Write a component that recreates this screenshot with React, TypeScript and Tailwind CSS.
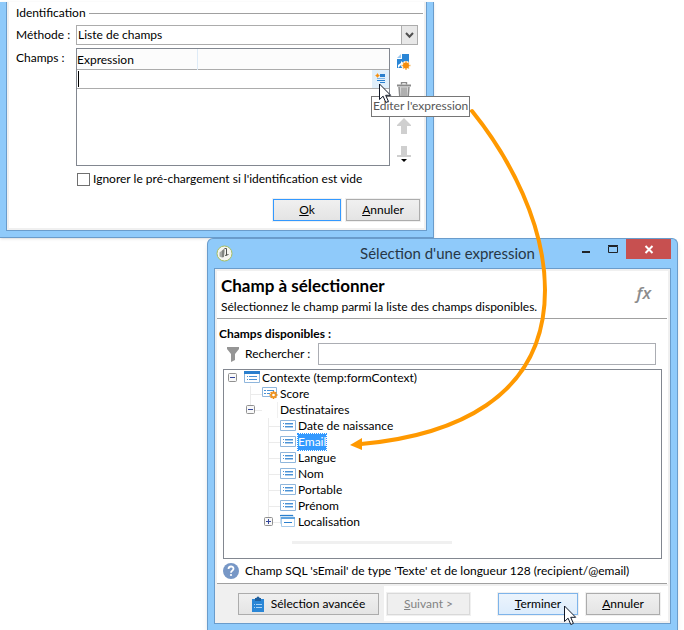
import type { ReactNode } from "react";
import clsx from "clsx";

interface TreeItem {
  label: string;
  level: number;
  icon: "table" | "score" | "field" | "folder" | "none";
  toggle?: "open" | "closed";
  selected?: boolean;
  last?: boolean;
}

const treeItems: TreeItem[] = [
  { label: "Contexte (temp:formContext)", level: 0, icon: "table", toggle: "open" },
  { label: "Score", level: 1, icon: "score" },
  { label: "Destinataires", level: 1, icon: "none", toggle: "open", last: true },
  { label: "Date de naissance", level: 2, icon: "field" },
  { label: "Email", level: 2, icon: "field", selected: true },
  { label: "Langue", level: 2, icon: "field" },
  { label: "Nom", level: 2, icon: "field" },
  { label: "Portable", level: 2, icon: "field" },
  { label: "Prénom", level: 2, icon: "field" },
  { label: "Localisation", level: 2, icon: "folder", toggle: "closed", last: true },
];

function Cursor({ className }: { className?: string }) {
  return (
    <svg className={clsx("pointer-events-none absolute z-20", className)} width="13" height="21" viewBox="0 0 13 21">
      <path d="M.5 1v15.5l3.6-3.3 2.7 6.3 2.6-1.1-2.7-6.1h5z" fill="#fff" stroke="#111827" />
    </svg>
  );
}

function NewIcon() {
  return (
    <svg width="14" height="16" viewBox="0 0 14 16">
      <path d="M5 0h7v14H0V5h5z" fill="#2a86d6" />
      <path d="M0 4l4-4v4z" fill="#9cc8ee" />
      <path d="M1 14v-3l3-2V7l3 3-3 3v-2z" fill="#fff" />
      <circle cx="9" cy="11.500" r="4.500" fill="#fff" />
      <path d="M9 7v9M4.500 11.500h9M6 8.500l6 6M12 8.500l-6 6" stroke="#f6b55c" strokeWidth="1.500" />
      <circle cx="9" cy="11.500" r="3" fill="#f28c0f" />
    </svg>
  );
}

function TrashIcon() {
  return (
    <svg width="14" height="16" viewBox="0 0 14 16" fill="none" stroke="#8a8a8a">
      <path d="M4.500 2.500v-2h5v2" strokeWidth="1.400" />
      <path d="M0 3.500h14" strokeWidth="2" />
      <path d="M2 5l.8 10.300h8.400L12 5" fill="#d5d5d5" strokeWidth="1.400" />
      <path d="M5 5.500v9M7 5.500v9M9 5.500v9" strokeWidth="1" />
    </svg>
  );
}

function ExpressionIcon() {
  return (
    <svg width="11" height="11" viewBox="0 0 11 11">
      <path d="M5 1h5v3H5z" fill="#2a7fce" />
      <path d="M2 5.500h8" stroke="#7fb6e6" />
      <path d="M2 7.500h8M5 9.500h5" stroke="#2a7fce" />
      <path d="M2.500 0v5M0 2.500h5" stroke="#f9c27a" />
      <circle cx="2.500" cy="2.500" r="1.500" fill="#f28c0f" />
    </svg>
  );
}

function NodeIcon({ icon }: { icon: TreeItem["icon"] }) {
  return (
    <svg width="18" height="16" viewBox="0 0 18 16" className="shrink-0">
      {icon === "table" && (
        <g>
          <path d="M.5 2.500h15v10H.5z" fill="#fff" stroke="#8fb6dc" />
          <path d="M0 1h16v3H0z" fill="#2a7fce" />
          <path d="M3 6.500h1M3 9.500h1M5 6.500h8M5 9.500h8" stroke="#4a92d6" />
        </g>
      )}
      {icon === "field" && (
        <g>
          <path d="M.5 2.500h15v10H.5z" fill="#fff" stroke="#8fb6dc" />
          <path d="M3 5.500h1M3 8.500h1M5 5.500h8M5 8.500h8" stroke="#4a92d6" />
          <path d="M5 6.500h8M5 9.500h8" stroke="#a9cdee" />
        </g>
      )}
      {icon === "score" && (
        <g>
          <path d="M.5 1.500h14v9H.5z" fill="#fff" stroke="#8fb6dc" />
          <path d="M2 4.500h2M2 7.500h2M5 4.500h7M5 7.500h3" stroke="#4a92d6" />
          <path d="M11.500 5v8M7.500 9h8M8.700 6.200l5.600 5.600M14.300 6.200l-5.600 5.600" stroke="#e8860f" strokeWidth="1.600" />
          <circle cx="11.500" cy="9" r="2.200" fill="#fff" stroke="#f0941f" strokeWidth="1.700" />
        </g>
      )}
      {icon === "folder" && (
        <g>
          <path d="M.5 1v8.500H2V3h11V1z" fill="#dcebf8" stroke="#c3daef" />
          <path d="M0 1h13v1H0z" fill="#2a7fce" />
          <path d="M1.500 3.500h13v9h-13z" fill="#fff" stroke="#a8cbea" />
          <path d="M1 3h14v2H1z" fill="#5fa3df" />
          <path d="M4 8.500h8" stroke="#2a7fce" />
        </g>
      )}
      {icon === "none" && <path d="M15.500 0v16" stroke="#f0f0f0" />}
    </svg>
  );
}

function TreeBranch({ item }: { item: TreeItem }) {
  return (
    <svg width="18" height="16" viewBox="0 0 18 16" className="shrink-0">
      {item.level > 0 && (
        <path d={item.last ? "M6.500 0v8.500H18" : "M6.500 0v16M6.500 8.500H18"} fill="none" stroke="#ebebeb" />
      )}
      {item.toggle && (
        <g>
          <rect x="2.500" y="3.500" width="8" height="8" rx="1" fill="#f8f8f8" stroke="#919191" />
          <path d={item.toggle === "open" ? "M4 7.500h5" : "M4 7.500h5M6.500 5v5"} stroke="#34469a" />
        </g>
      )}
    </svg>
  );
}

function DialogButton({ children, className, disabled }: { children: ReactNode; className?: string; disabled?: boolean }) {
  return (
    <button
      disabled={disabled}
      className={clsx("relative flex h-[22px] items-center justify-center border outline outline-[#f0f0f0]", className)}
    >
      {children}
    </button>
  );
}

const grayButton = "border-[#acacac] bg-linear-to-b from-[#f0f0f0] to-[#e4e4e4]";

function IdentificationDialog() {
  return (
    <section className="mr-[250px] border-r border-b border-[#6a9ccb] bg-[#8fcafa] pr-[6px] pb-[6px] pl-[6px] shadow-sm">
      <div className="border-x border-b border-[#6a9ccb] bg-[#f0f0f0] px-[2px] pb-[2px]">
        <div className="bg-white pr-[4px] pb-[7px] pl-[7px]">
          <div className="flex h-[22px] items-center gap-[3px]">
            <h2>Identification</h2>
            <div className="-mr-[3px] h-px flex-1 bg-[#a0a0a0]" />
          </div>

          <div className="mt-px flex items-center">
            <label htmlFor="methode" className="w-[60px] shrink-0">Méthode :</label>
            <div className="relative mr-[2px] h-5 flex-1">
              <select id="methode" className="h-5 w-full appearance-none border border-[#acacac] bg-white pl-px">
                <option>Liste de champs</option>
              </select>
              <span className="pointer-events-none absolute inset-y-0 right-0 flex w-[17px] items-center justify-center border border-[#acacac] bg-[#e8e8e8]">
                <svg width="9" height="7" viewBox="0 0 9 7">
                  <path d="M1 1l3.500 3.800L8 1" fill="none" stroke="#505050" strokeWidth="2" />
                </svg>
              </span>
            </div>
          </div>

          <div className="mt-[3px] flex">
            <label htmlFor="expression" className="w-[60px] shrink-0 leading-5">Champs :</label>
            <div className="h-[118px] flex-1 border border-[#828790]">
              <table className="w-full border-collapse">
                <thead>
                  <tr className="h-5 border-b border-[#acacac] bg-[#fcfcfc]">
                    <th className="w-[120px] border-r border-[#deebf7] p-0 pt-[2px] text-left font-normal">Expression</th>
                    <th className="p-0" />
                  </tr>
                </thead>
                <tbody>
                  <tr className="h-[19px] border-b border-[#acacac]">
                    <td colSpan={2} className="p-0">
                      <div className="flex h-[18px]">
                        <div className="flex flex-1 py-px pl-px">
                          <span className="w-px bg-black" />
                          <input id="expression" type="text" className="w-full outline-none" />
                        </div>
                        <button aria-label="Editer l'expression" className="relative flex w-[17px] items-center justify-center bg-[#e0effb]">
                          <ExpressionIcon />
                          <Cursor className="top-[13px] left-[7px]" />
                          <span role="tooltip" className="absolute top-[26px] -left-px z-10 flex h-[21px] items-center border border-[#767676] bg-white px-px whitespace-nowrap text-[#575757]">
                            Editer l'expression
                          </span>
                        </button>
                      </div>
                    </td>
                  </tr>
                </tbody>
              </table>
            </div>
            <div className="flex w-7 flex-col items-center gap-3 pt-[6px]">
              <button aria-label="Ajouter"><NewIcon /></button>
              <button aria-label="Supprimer"><TrashIcon /></button>
              <button aria-label="Monter" className="pt-2">
                <svg width="14" height="16" viewBox="0 0 14 16"><path d="M7 0l7 7v1h-4v8H4V8H0V7z" fill="#cfcfcf" /></svg>
              </button>
              <button aria-label="Descendre">
                <svg width="14" height="17" viewBox="0 0 14 17">
                  <path d="M4 0h6v9h4v2H0V9h4z" fill="#cfcfcf" />
                  <path d="M4 13h6l-3 3z" fill="#000" />
                </svg>
              </button>
            </div>
            <div className="w-[2px]" />
          </div>

          <label className="mt-1 flex h-[18px] items-center gap-[3px] pl-[61px]">
            <input type="checkbox" className="size-[13px] appearance-none border border-[#707070] bg-white" />
            Ignorer le pré-chargement si l'identification est vide
          </label>

          <div className="mt-[11px] flex justify-end gap-[5px]">
            <DialogButton className="w-[68px] border-[#3399ff] bg-linear-to-b from-[#f0f0f0] to-[#e4e4e4]"><span><u>O</u>k</span></DialogButton>
            <DialogButton className={clsx("w-[74px]", grayButton)}><span><u>A</u>nnuler</span></DialogButton>
          </div>
        </div>
      </div>
    </section>
  );
}

function TitleBar() {
  return (
    <header className="flex h-[29px] items-start pr-[6px] pl-2">
      <svg className="mt-[6px] shrink-0" width="17" height="17" viewBox="0 0 17 17">
        <circle cx="8.500" cy="8.500" r="7.500" fill="#f4f5f0" stroke="#a5bd62" />
        <path d="M3.500 7.500l2.500-2v7l-2.500-1z" fill="#a4a8a4" />
        <path d="M6 5.500l2.500-2v3L8 12l-2 .5z" fill="#808480" />
        <path d="M10.500 3.500v7M9 10.500l3.500-1M8.500 3.500h2" fill="none" stroke="#50534f" />
      </svg>
      <h1 className="mt-[3px] flex-1 pl-[90px] text-center text-[15px] leading-[22px] text-[#273746]">Sélection d'une expression</h1>
      <div className="flex shrink-0">
        <button aria-label="Réduire" className="h-5 w-[27px]">
          <svg width="27" height="20" viewBox="0 0 27 20"><path d="M10 13h8" stroke="#1f2328" strokeWidth="2" /></svg>
        </button>
        <button aria-label="Agrandir" className="h-5 w-[27px]">
          <svg width="27" height="20" viewBox="0 0 27 20"><path d="M9.500 7.500h9v6h-9zM9 6.500h10" fill="none" stroke="#1f2328" /></svg>
        </button>
        <button aria-label="Fermer" className="h-5 w-[45px] bg-[#c75050]">
          <svg width="45" height="20" viewBox="0 0 45 20"><path d="M19.500 7l7 7M26.500 7l-7 7" stroke="#fff" strokeWidth="2" /></svg>
        </button>
      </div>
    </header>
  );
}

function SelectionDialog() {
  return (
    <section className="mr-[6px] ml-[207px] rounded-t-md border-x border-t border-[#6a9ccb] bg-[#8fcafa] pb-[6px] shadow-md">
      <TitleBar />
      <div className="mx-[6px] border border-[#6a9ccb] bg-[#f0f0f0] px-[2px] py-[2px]">
        <div className="bg-white">
          <div className="mr-px flex h-12 items-center justify-between border-b border-[#a0a0a0] pr-4 pl-1">
            <div className="pt-[2px]">
              <h2 className="text-[17px] leading-[22px] font-bold">Champ à sélectionner</h2>
              <p className="leading-5">Sélectionnez le champ parmi la liste des champs disponibles.</p>
            </div>
            <span className="pb-1 font-['Open_Sans',sans-serif] text-[17px] leading-4 font-semibold text-[#8c8c8c] italic">fx</span>
          </div>

          <div className="px-[6px] pt-[6px]">
            <h3 className="-ml-1 leading-[18px] font-bold">Champs disponibles :</h3>
            <div className="flex h-[22px] items-center pr-[6px]">
              <svg className="mr-[6px] ml-1 shrink-0" width="12" height="15" viewBox="0 0 12 15">
                <path d="M0 0h12v2L8 7v6l-4 2V7L0 2z" fill="#959595" />
              </svg>
              <label htmlFor="rechercher" className="w-[73px] shrink-0">Rechercher :</label>
              <input id="rechercher" type="search" className="h-[22px] w-full border border-[#abadb3] bg-white px-1 outline-none" />
            </div>

            <div className="mt-1 h-[190px] border border-[#828790] bg-white">
              <ul role="tree" className="pl-[2px]">
                {treeItems.map((item) => (
                  <li
                    key={item.label}
                    role="treeitem"
                    aria-level={item.level + 1}
                    aria-selected={!!item.selected}
                    className={clsx("flex h-4 items-center", item.level === 1 && "pl-[18px]", item.level === 2 && "pl-9")}
                  >
                    <TreeBranch item={item} />
                    <NodeIcon icon={item.icon} />
                    <span
                      className={clsx(
                        "leading-4",
                        item.selected && "bg-[#3399ff] text-white outline outline-dotted outline-[#3399ff]"
                      )}
                    >
                      {item.label}
                    </span>
                  </li>
                ))}
              </ul>
              <div className="mt-[11px] ml-[68px] h-[3px] w-40 bg-[#f0f0f0]" />
            </div>

            <div className="flex h-6 items-center gap-[6px]">
              <svg width="16" height="16" viewBox="0 0 16 16" className="shrink-0">
                <circle cx="8" cy="8" r="8" fill="#7797c6" />
                <path d="M5.500 6c0-3.300 5-3.300 5-.3 0 1.900-2.500 1.900-2.500 4" fill="none" stroke="#fff" strokeWidth="1.800" />
                <circle cx="8" cy="12" r="1.100" fill="#fff" />
              </svg>
              <p>Champ SQL 'sEmail' de type 'Texte' et de longueur 128 (recipient/@email)</p>
            </div>
          </div>
          <div className="mr-px h-px bg-[#a0a0a0]" />
        </div>

        <footer className="mt-[2px] flex h-[35px]">
          <div className="flex shrink-0 items-center pr-[5px] pl-[21px]">
            <DialogButton className={clsx("w-[141px] gap-[7px]", grayButton)}>
              <svg width="12" height="16" viewBox="0 0 12 16">
                <path d="M0 3h12v13H0z" fill="#2a86d6" />
                <path d="M3 2h1.500a1.500 1.500 0 013 0H9v3H3z" fill="#1f5f9e" />
                <path d="M2 8.500h1M4 8.500h6M2 11.500h1M4 11.500h6" stroke="#a9d2f5" />
              </svg>
              Sélection avancée
            </DialogButton>
          </div>
          <div className="flex flex-1 items-center bg-white pr-2 pl-[3px]">
            <DialogButton disabled className="w-[83px] border-[#d9d9d9] bg-[#efefef] text-[#838383]"><span><u>S</u>uivant &gt;</span></DialogButton>
            <DialogButton className="ml-auto w-20 border-[#7eb4ea] bg-linear-to-b from-[#ecf4fc] to-[#dcecfc]">
              <span><u>T</u>erminer</span>
              <Cursor className="top-[11px] right-0" />
            </DialogButton>
            <DialogButton className={clsx("ml-2 w-[74px]", grayButton)}><span><u>A</u>nnuler</span></DialogButton>
          </div>
        </footer>
      </div>
    </section>
  );
}

export default function App() {
  return (
    <main className="relative overflow-hidden bg-white pt-[2px] font-['Lato','Open_Sans',sans-serif] text-[12px] leading-4 text-black">
      <IdentificationDialog />
      <SelectionDialog />

      {/* Arrow from the edit button to the selected field */}
      <svg className="pointer-events-none absolute top-0 left-0 z-10" width="684" height="630" viewBox="0 0 684 630">
        <path d="M472 111C510 158 545 225 545 290C545 400 450 436 361 444" fill="none" stroke="#ff9900" strokeWidth="4" strokeLinecap="round" />
        <path d="M350 445l12-7v12z" fill="#ff9900" />
      </svg>
    </main>
  );
}
